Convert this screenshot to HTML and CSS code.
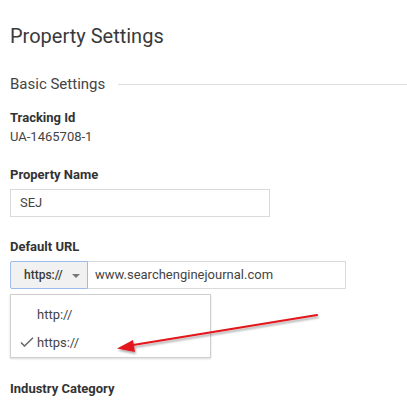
FILE: index.html
```html
<!DOCTYPE html>
<html>
<head>
<meta charset="utf-8">
<link rel="stylesheet" href="styles.css">
</head>
<body>
<div class="page">
  <h1 class="title">Property Settings</h1>
  <div class="section-head">
    <span class="section-name">Basic Settings</span>
    <span class="section-rule"></span>
  </div>
  <div class="field first">
    <div class="label">Tracking Id</div>
    <div class="value">UA-1465708-1</div>
  </div>
  <div class="field">
    <div class="label">Property Name</div>
    <div class="input name-input">SEJ</div>
  </div>
  <div class="field">
    <div class="label">Default URL</div>
    <div class="url-row">
      <div class="proto-btn"><span>https://</span><span class="caret"></span></div>
      <div class="input url-input">www.searchenginejournal.com</div>
    </div>
    <div class="menu">
      <div class="menu-item"><span class="check"></span>http://</div>
      <div class="menu-item"><span class="check"><svg width="14" height="10" viewBox="0 0 14 10"><polyline points="1,5.5 4.5,9 13,0.8" fill="none" stroke="#666" stroke-width="1.5"/></svg></span>https://</div>
    </div>
  </div>
  <div class="field industry">
    <div class="label">Industry Category</div>
  </div>
  <svg class="arrow" width="407" height="401" viewBox="0 0 407 401">
    <defs>
      <filter id="sh" x="-10%" y="-50%" width="120%" height="200%">
        <feGaussianBlur in="SourceAlpha" stdDeviation="1.2"/>
        <feOffset dx="1" dy="1.5"/>
        <feComponentTransfer><feFuncA type="linear" slope="0.35"/></feComponentTransfer>
        <feMerge><feMergeNode/><feMergeNode in="SourceGraphic"/></feMerge>
      </filter>
    </defs>
    <g filter="url(#sh)">
      <line x1="317" y1="315" x2="130" y2="345.5" stroke="#e2171b" stroke-width="2.2" stroke-linecap="round"/>
      <polygon points="117,348.5 133,340 135,352" fill="#e2171b"/>
    </g>
  </svg>
</div>
</body>
</html>
```
FILE: styles.css
```css
html, body {
  margin: 0;
  padding: 0;
  background: #ffffff;
}
.page {
  position: relative;
  width: 407px;
  height: 401px;
  overflow: hidden;
  padding-left: 10px;
  box-sizing: border-box;
  font-family: Roboto, "Liberation Sans", Arial, sans-serif;
  color: #333333;
}
.title {
  margin: 0;
  padding-top: 24px;
  font-size: 20px;
  font-weight: 400;
  line-height: 24px;
  color: #3a3a3a;
}
.section-head {
  display: flex;
  align-items: center;
  gap: 13px;
  margin-top: 26px;
  height: 20px;
}
.section-name {
  font-size: 15px;
  color: #444444;
  white-space: nowrap;
}
.section-rule {
  flex: 1;
  height: 1px;
  background: #dddddd;
}
.field {
  margin-top: 22px;
}
.field.first {
  margin-top: 16px;
}
.label {
  font-size: 13px;
  font-weight: 700;
  line-height: 16px;
  color: #333333;
}
.value {
  font-size: 13px;
  line-height: 16px;
  margin-top: 3px;
  color: #444444;
}
.input {
  box-sizing: border-box;
  height: 28px;
  border: 1px solid #dadada;
  font-size: 13px;
  line-height: 26px;
  color: #444444;
  background: #fff;
}
.name-input {
  width: 260px;
  margin-top: 6px;
  padding-left: 9px;
}
.url-row {
  display: flex;
  margin-top: 6px;
}
.proto-btn {
  box-sizing: border-box;
  width: 78px;
  height: 28px;
  border: 1px solid #9dbbec;
  border-radius: 2px 0 0 2px;
  background: #f1f1f1;
  display: flex;
  align-items: center;
  padding-left: 13px;
  gap: 9px;
  font-size: 12px;
  font-weight: 500;
  color: #3a3a3a;
}
.caret {
  width: 0;
  height: 0;
  border-left: 4px solid transparent;
  border-right: 4px solid transparent;
  border-top: 4px solid #777777;
  margin-top: 1px;
}
.url-input {
  width: 258px;
  border-left: none;
  padding-left: 7px;
  font-size: 13px;
}
.menu {
  box-sizing: border-box;
  width: 201px;
  height: 64px;
  margin-top: 5px;
  border: 1px solid #cfcfcf;
  box-shadow: 0 1px 2px rgba(0,0,0,0.15);
  padding-top: 5px;
  background: #fff;
}
.menu-item {
  display: flex;
  align-items: center;
  height: 28px;
  font-size: 13px;
  color: #444444;
}
.check {
  width: 26px;
  padding-left: 9px;
  box-sizing: border-box;
  display: flex;
  align-items: center;
}
.field.industry {
  margin-top: 23px;
}
.arrow {
  position: absolute;
  left: 0;
  top: 0;
  pointer-events: none;
}
```
